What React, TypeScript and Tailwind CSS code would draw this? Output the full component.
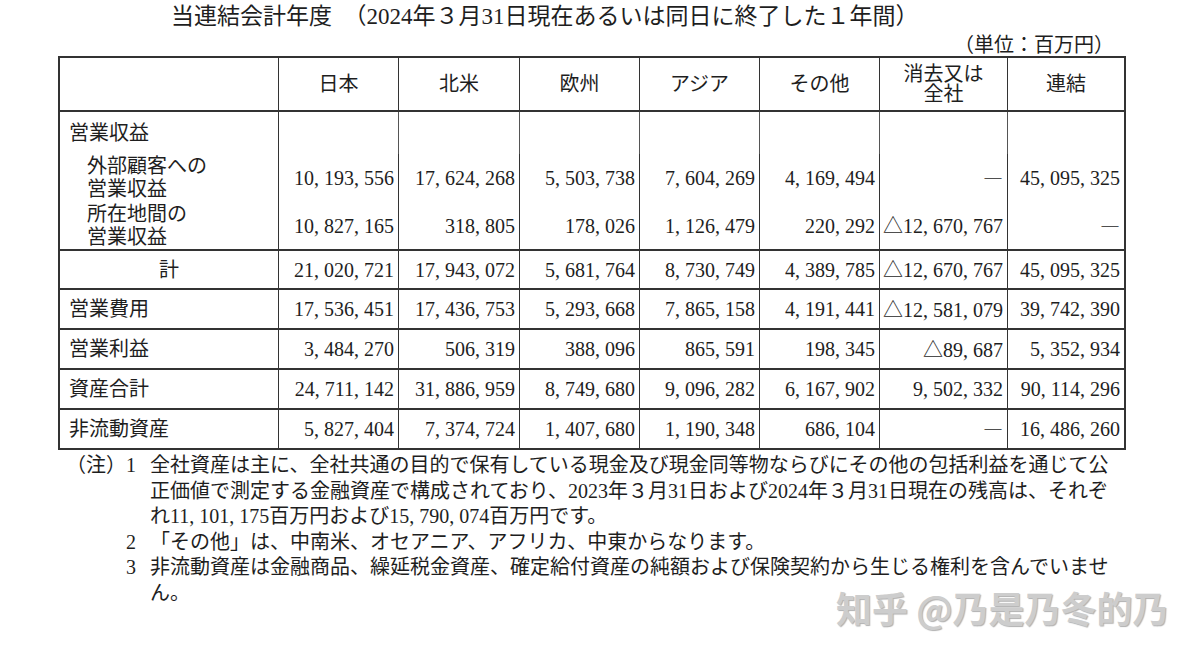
import React, { Fragment } from "react";

const COLS =
  "grid grid-cols-[219px_120px_121px_120px_120px_120px_128px_116px]";

function Num({ v }: { v: string }) {
  if (v === "―") {
    return <span className="font-['Noto_Sans_CJK_JP',sans-serif]">―</span>;
  }
  let prefix = "";
  let body = v;
  if (v.startsWith("△")) {
    prefix = "△";
    body = v.slice(1);
  }
  const parts = body.split(",");
  return (
    <span className="whitespace-nowrap">
      {prefix && (
        <span className="font-['Noto_Sans_CJK_JP',sans-serif]">{prefix}</span>
      )}
      {parts.map((p, i) => (
        <Fragment key={i}>
          {i > 0 && <span className="inline-block w-[0.5em]">,</span>}
          {p}
        </Fragment>
      ))}
    </span>
  );
}

function NumCells({ values }: { values: string[] }) {
  return (
    <>
      {values.map((v, i) => (
        <div
          key={i}
          className={
            i < values.length - 1
              ? "flex items-center justify-end pr-[4px] border-r border-[#333]"
              : "flex items-center justify-end pr-[4px]"
          }
        >
          <Num v={v} />
        </div>
      ))}
    </>
  );
}

const headers = ["日本", "北米", "欧州", "アジア", "その他", "消去又は\n全社", "連結"];

const ext = ["10,193,556", "17,624,268", "5,503,738", "7,604,269", "4,169,494", "―", "45,095,325"];
const inter = ["10,827,165", "318,805", "178,026", "1,126,479", "220,292", "△12,670,767", "―"];
const total = ["21,020,721", "17,943,072", "5,681,764", "8,730,749", "4,389,785", "△12,670,767", "45,095,325"];

const simpleRows: { label: string; values: string[] }[] = [
  { label: "営業費用", values: ["17,536,451", "17,436,753", "5,293,668", "7,865,158", "4,191,441", "△12,581,079", "39,742,390"] },
  { label: "営業利益", values: ["3,484,270", "506,319", "388,096", "865,591", "198,345", "△89,687", "5,352,934"] },
  { label: "資産合計", values: ["24,711,142", "31,886,959", "8,749,680", "9,096,282", "6,167,902", "9,502,332", "90,114,296"] },
];

const last = { label: "非流動資産", values: ["5,827,404", "7,374,724", "1,407,680", "1,190,348", "686,104", "―", "16,486,260"] };

export default function App() {
  return (
    <div className="relative w-[1195px] h-[655px] overflow-hidden bg-white text-[#1e1e1e] font-['Liberation_Serif','Noto_Sans_CJK_JP',serif]">
      {/* Title */}
      <div className="h-[34px] pl-[171px] text-[23px] leading-[34px] whitespace-nowrap">
        当連結会計年度　（2024年３月31日現在あるいは同日に終了した１年間）
      </div>
      <div className="h-[22px] ml-[58px] w-[1068px] pr-[12px] text-right text-[20px] leading-[22px] whitespace-nowrap">
        （単位：百万円）
      </div>

      {/* Table */}
      <div className="ml-[58px] w-[1068px] border-2 border-[#333] text-[20px]">
        {/* header */}
        <div className={`${COLS} h-[54px] border-b-2 border-[#333]`}>
          <div className="border-r border-[#333]" />
          {headers.map((h, i) => (
            <div
              key={i}
              className={
                i < headers.length - 1
                  ? "flex flex-col items-center justify-center border-r border-[#333] leading-[20px]"
                  : "flex flex-col items-center justify-center leading-[20px]"
              }
            >
              {h.split("\n").map((l, j) => (
                <span key={j} className="block h-[20px]">{l}</span>
              ))}
            </div>
          ))}
        </div>

        {/* group: 営業収益 */}
        <div className="border-b-2 border-[#333]">
          <div className={`${COLS} h-[42px]`}>
            <div className="flex items-center pl-[9px] border-r border-[#333]">営業収益</div>
            {[0, 1, 2, 3, 4, 5].map((i) => (
              <div key={i} className="border-r border-[#555]" />
            ))}
            <div />
          </div>
          <div className={`${COLS} h-[48px]`}>
            <div className="flex flex-col justify-center pl-[27px] leading-[23px] border-r border-[#333]">
              <span>外部顧客への</span>
              <span>営業収益</span>
            </div>
            <NumCells values={ext} />
          </div>
          <div className={`${COLS} h-[47px]`}>
            <div className="flex flex-col justify-center pl-[27px] leading-[23px] border-r border-[#333]">
              <span>所在地間の</span>
              <span>営業収益</span>
            </div>
            <NumCells values={inter} />
          </div>
        </div>

        {/* 計 */}
        <div className={`${COLS} h-[39px] border-b-2 border-[#333]`}>
          <div className="flex items-center justify-center border-r border-[#333]">計</div>
          <NumCells values={total} />
        </div>

        {simpleRows.map((r) => (
          <div key={r.label} className={`${COLS} h-[40px] border-b-2 border-[#333]`}>
            <div className="flex items-center pl-[9px] border-r border-[#333]">{r.label}</div>
            <NumCells values={r.values} />
          </div>
        ))}

        <div className={`${COLS} h-[38px]`}>
          <div className="flex items-center pl-[9px] border-r border-[#333]">{last.label}</div>
          <NumCells values={last.values} />
        </div>
      </div>

      {/* Notes */}
      <div className="pt-[3px] pl-[66px] text-[20px] leading-[25.5px] whitespace-nowrap">
        <div className="flex">
          <span className="w-[60px]">（注）</span>
          <span className="w-[24px]">1</span>
          <span>全社資産は主に、全社共通の目的で保有している現金及び現金同等物ならびにその他の包括利益を通じて公</span>
        </div>
        <div className="pl-[84px]">
          正価値で測定する金融資産で構成されており、2023年３月31日および2024年３月31日現在の残高は、それぞ
        </div>
        <div className="pl-[84px]">
          れ<Num v="11,101,175" />百万円および<Num v="15,790,074" />百万円です。
        </div>
        <div className="flex pl-[60px]">
          <span className="w-[24px]">2</span>
          <span>「その他」は、中南米、オセアニア、アフリカ、中東からなります。</span>
        </div>
        <div className="flex pl-[60px]">
          <span className="w-[24px]">3</span>
          <span>非流動資産は金融商品、繰延税金資産、確定給付資産の純額および保険契約から生じる権利を含んでいませ</span>
        </div>
        <div className="pl-[84px]">ん。</div>
      </div>

      {/* Watermark */}
      <div className="absolute left-[836px] top-[586px] whitespace-nowrap text-[36px] leading-[42px] font-bold text-[#cdcdcd] font-['Noto_Sans_CJK_SC',sans-serif] [text-shadow:1px_1px_1px_#b0b0b0]">
        知乎 @乃是乃冬的乃
      </div>
    </div>
  );
}
